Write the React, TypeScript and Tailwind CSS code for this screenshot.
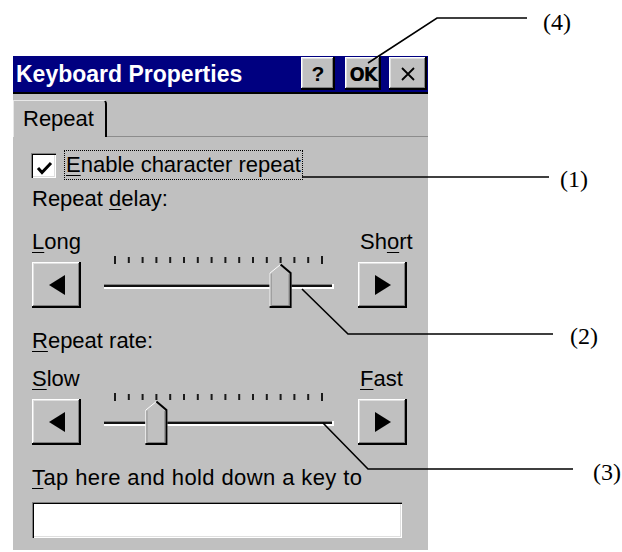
import React from 'react';

const raised =
  'bg-[#c0c0c0] shadow-[inset_-2px_-2px_0_#000,inset_1px_1px_0_#fff,inset_-3px_-3px_0_#808080,inset_2px_2px_0_#dfdfdf]';
const sunken =
  'shadow-[inset_1px_1px_0_#808080,inset_2px_2px_0_#000,inset_-1px_-1px_0_#fff,inset_-2px_-2px_0_#dfdfdf]';

const U = ({ children }: { children: React.ReactNode }) => (
  <span className="underline decoration-1 underline-offset-[3px]">{children}</span>
);

const TitleBar = () => (
  <div className="h-[38px] bg-[#000080] border-b-2 border-black flex items-start">
    <div className="flex-1 pl-[3px] pt-[7px] text-white font-bold text-[23px] leading-[22px]">
      Keyboard Properties
    </div>
    <div className="flex pt-[1px] pr-[1px]">
      <div className={`${raised} w-[34px] h-[33px] flex items-center justify-center font-bold text-[21px] leading-none`}>
        ?
      </div>
      <div
        className={`${raised} ml-[10px] w-[36px] h-[33px] flex items-center justify-center font-bold text-[20px] tracking-[-1px] leading-none font-['DejaVu_Sans_Condensed',sans-serif]`}
      >
        OK
      </div>
      <div className={`${raised} ml-[8px] w-[38px] h-[33px] flex items-center justify-center`}>
        <svg width="14" height="14" viewBox="0 0 14 14">
          <path d="M1 1 L13 13 M13 1 L1 13" stroke="#000" strokeWidth="1.8" />
        </svg>
      </div>
    </div>
  </div>
);

const TabStrip = () => (
  <div className="h-[43px] flex items-end">
    <div className="w-[94px] h-[37px] border-l border-t border-[#e8e8e8] border-r-2 border-r-black rounded-tr-[4px] pl-[9px] pt-[7px] text-[22px] leading-[22px]">
      Repeat
    </div>
    <div className="flex-1 h-full border-b border-[#8c8c8c]" />
  </div>
);

const ArrowButton = ({ dir }: { dir: 'left' | 'right' }) => (
  <div className={`${raised} self-end w-[49px] h-[46px] flex items-center justify-center`}>
    <svg width="16" height="20" viewBox="0 0 16 20">
      {dir === 'left' ? <polygon points="16,0 16,20 0,10" fill="#000" /> : <polygon points="0,0 0,20 16,10" fill="#000" />}
    </svg>
  </div>
);

const Slider = ({ pos }: { pos: number }) => {
  const ticks = Array.from({ length: 16 }, (_, i) => 34 + i * 13.8);
  const cx = ticks[pos];
  const l = cx - 11;
  const r = cx + 11;
  return (
    <svg width="277" height="52" viewBox="0 0 277 52" className="shrink-0">
      {ticks.map((x, i) => (
        <rect
          key={i}
          x={x - 1}
          y={i === 0 || i === 15 ? 0 : 1}
          width="2"
          height={i === 0 || i === 15 ? 8 : 6}
          fill="#1a1a1a"
        />
      ))}
      <rect x="23" y="28" width="229" height="1" fill="#808080" />
      <rect x="23" y="29" width="229" height="2" fill="#111" />
      <rect x="23" y="31" width="230" height="2" fill="#fff" />
      <rect x="251" y="28" width="2" height="5" fill="#fff" />
      <polygon points={`${l},17 ${cx},8 ${r},17 ${r},52 ${l},52`} fill="#c0c0c0" />
      <polyline points={`${l + 0.5},51 ${l + 0.5},17 ${cx},8.5`} fill="none" stroke="#fff" strokeWidth="1" />
      <polyline points={`${l + 1.5},50 ${l + 1.5},17.5`} fill="none" stroke="#8a8a8a" strokeWidth="1" />
      <polyline points={`${cx},8.5 ${r - 1},17 ${r - 1},51 ${l},51`} fill="none" stroke="#000" strokeWidth="2" />
      <polyline points={`${r - 2.5},18 ${r - 2.5},49.5 ${l + 2},49.5`} fill="none" stroke="#808080" strokeWidth="1" />
    </svg>
  );
};

const SliderRow = ({ pos }: { pos: number }) => (
  <div className="h-[52px] flex">
    <ArrowButton dir="left" />
    <Slider pos={pos} />
    <ArrowButton dir="right" />
  </div>
);

const Annotations = () => (
  <>
    <svg className="absolute inset-0 pointer-events-none" width="622" height="552" viewBox="0 0 622 552">
      <g fill="none" stroke="#000" strokeWidth="1.6">
        <polyline points="527,18 437,18 368,63" />
        <polyline points="302,177 549,177" />
        <polyline points="302,289 348,334 553,334" />
        <polyline points="323,423 368,469 573,469" />
      </g>
    </svg>
    <div className="absolute left-[543px] top-[10px] font-['Liberation_Serif',serif] text-[24px] leading-none">(4)</div>
    <div className="absolute left-[560px] top-[167px] font-['Liberation_Serif',serif] text-[24px] leading-none">(1)</div>
    <div className="absolute left-[570px] top-[324px] font-['Liberation_Serif',serif] text-[24px] leading-none">(2)</div>
    <div className="absolute left-[593px] top-[460px] font-['Liberation_Serif',serif] text-[24px] leading-none">(3)</div>
  </>
);

export default function App() {
  return (
    <div className="relative w-[622px] h-[552px] bg-white overflow-hidden text-black font-['Liberation_Sans',Arial,sans-serif]">
      <div className="pt-[56px] pl-[13px]">
        <div className="w-[415px] h-[494px] bg-[#c0c0c0] flex flex-col">
          <TitleBar />
          <TabStrip />
          <div className="flex flex-col pl-[19px] text-[22px] leading-[22px]">
            <div className="mt-[13px] h-[30px] flex items-center">
              <div className={`${sunken} ml-[-1px] w-[25px] h-[25px] bg-white relative`}>
                <svg className="absolute inset-0" width="25" height="25" viewBox="0 0 25 25">
                  <polyline points="7,15 11,19.5 20,10" fill="none" stroke="#000" strokeWidth="3" />
                </svg>
              </div>
              <div className="ml-[8px] h-[30px] px-[1px] border border-dotted border-black flex items-center">
                <span>
                  <U>E</U>nable character repeat
                </span>
              </div>
            </div>
            <div className="mt-[8px]">
              Repeat <U>d</U>elay:
            </div>
            <div className="mt-[21px] flex">
              <div className="w-[326px]">
                <U>L</U>ong
              </div>
              <div className="pl-[2px]">
                Sh<U>o</U>rt
              </div>
            </div>
            <div className="mt-[3px]">
              <SliderRow pos={12} />
            </div>
            <div className="mt-[22px]">
              <U>R</U>epeat rate:
            </div>
            <div className="mt-[16px] flex">
              <div className="w-[326px]">
                <U>S</U>low
              </div>
              <div className="pl-[2px]">
                <U>F</U>ast
              </div>
            </div>
            <div className="mt-[3px]">
              <SliderRow pos={3} />
            </div>
            <div className="mt-[22px] tracking-[0.4px]">
              <U>T</U>ap here and hold down a key to
            </div>
            <div className={`${sunken} mt-[13px] w-[370px] h-[36px] bg-white`} />
          </div>
        </div>
      </div>
      <Annotations />
    </div>
  );
}
